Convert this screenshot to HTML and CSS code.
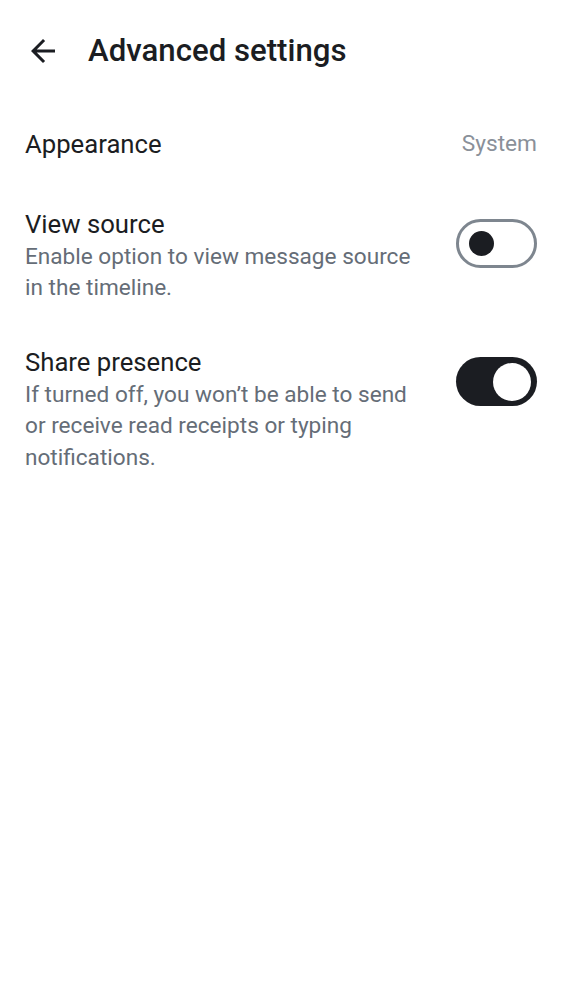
FILE: index.html
```html
<!DOCTYPE html>
<html>
<head>
<meta charset="utf-8">
<link rel="stylesheet" href="styles.css">
</head>
<body>
<div class="topbar">
  <svg class="back" viewBox="0 0 24 24" width="36" height="36"><path d="M20 11H7.83l5.59-5.59L12 4l-8 8 8 8 1.41-1.41L7.83 13H20v-2z" fill="#1b1d22"/></svg>
  <h1 class="title">Advanced settings</h1>
</div>
<div class="list">
  <div class="row row-single">
    <div class="label">Appearance</div>
    <div class="value">System</div>
  </div>
  <div class="row">
    <div class="text">
      <div class="label">View source</div>
      <div class="desc">Enable option to view message source in the timeline.</div>
    </div>
    <div class="switch off"><div class="thumb"></div></div>
  </div>
  <div class="row">
    <div class="text">
      <div class="label">Share presence</div>
      <div class="desc">If turned off, you won’t be able to send or receive read receipts or typing notifications.</div>
    </div>
    <div class="switch on"><div class="thumb"></div></div>
  </div>
</div>
</body>
</html>
```
FILE: styles.css
```css
html, body {
  margin: 0;
  padding: 0;
  background: #ffffff;
  font-family: Roboto, "Noto Sans", sans-serif;
  color: #1b1d22;
}
.topbar {
  display: flex;
  align-items: center;
  height: 101px;
  padding-left: 25px;
}
.back {
  display: block;
  flex: none;
}
.title {
  margin: 0 0 0 27px;
  font-size: 31.2px;
  font-weight: 500;
  line-height: 40px;
}
.list {
  display: flex;
  flex-direction: column;
}
.row {
  display: flex;
  align-items: flex-start;
  padding: 20.5px 25px;
  gap: 36px;
}
.row-single {
  box-sizing: border-box;
  align-items: center;
  justify-content: space-between;
  height: 85px;
  padding-top: 0;
  padding-bottom: 0;
}
.text {
  flex: 1;
}
.label {
  font-size: 25.7px;
  line-height: 34px;
}
.value {
  font-size: 22.7px;
  color: #8a9099;
}
.desc {
  font-size: 22.6px;
  line-height: 31.5px;
  color: #656d77;
}
.switch {
  flex: none;
  width: 81px;
  height: 49px;
  margin-top: 12.5px;
  box-sizing: border-box;
  border-radius: 25px;
  display: flex;
  align-items: center;
}
.switch.off {
  border: 3px solid #7e868f;
  padding-left: 10px;
}
.switch.off .thumb {
  width: 25px;
  height: 25px;
  border-radius: 50%;
  background: #1b1d22;
}
.switch.on {
  background: #1b1d22;
  justify-content: flex-end;
  padding-right: 6px;
}
.switch.on .thumb {
  width: 38px;
  height: 38px;
  border-radius: 50%;
  background: #ffffff;
}
```
